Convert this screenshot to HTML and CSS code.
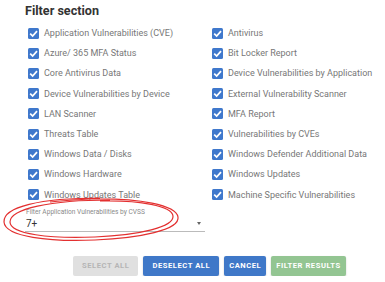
FILE: index.html
```html
<!DOCTYPE html>
<html lang="en">
<head>
  <meta charset="UTF-8" />
  <title>Filter section</title>
  <link rel="stylesheet" href="styles.css">
</head>
<body>
  <div class="panel">
    <h2 class="title">Filter section</h2>

    <div class="grid">
      <label class="item"><span class="box"><svg viewBox="0 0 10 10"><path d="M2 5.2 L4.2 7.3 L8.2 2.9" /></svg></span>Application Vulnerabilities (CVE)</label>
      <label class="item"><span class="box"><svg viewBox="0 0 10 10"><path d="M2 5.2 L4.2 7.3 L8.2 2.9" /></svg></span>Antivirus</label>
      <label class="item"><span class="box"><svg viewBox="0 0 10 10"><path d="M2 5.2 L4.2 7.3 L8.2 2.9" /></svg></span>Azure/ 365 MFA Status</label>
      <label class="item"><span class="box"><svg viewBox="0 0 10 10"><path d="M2 5.2 L4.2 7.3 L8.2 2.9" /></svg></span>Bit Locker Report</label>
      <label class="item"><span class="box"><svg viewBox="0 0 10 10"><path d="M2 5.2 L4.2 7.3 L8.2 2.9" /></svg></span>Core Antivirus Data</label>
      <label class="item"><span class="box"><svg viewBox="0 0 10 10"><path d="M2 5.2 L4.2 7.3 L8.2 2.9" /></svg></span>Device Vulnerabilities by Application</label>
      <label class="item"><span class="box"><svg viewBox="0 0 10 10"><path d="M2 5.2 L4.2 7.3 L8.2 2.9" /></svg></span>Device Vulnerabilities by Device</label>
      <label class="item"><span class="box"><svg viewBox="0 0 10 10"><path d="M2 5.2 L4.2 7.3 L8.2 2.9" /></svg></span>External Vulnerability Scanner</label>
      <label class="item"><span class="box"><svg viewBox="0 0 10 10"><path d="M2 5.2 L4.2 7.3 L8.2 2.9" /></svg></span>LAN Scanner</label>
      <label class="item"><span class="box"><svg viewBox="0 0 10 10"><path d="M2 5.2 L4.2 7.3 L8.2 2.9" /></svg></span>MFA Report</label>
      <label class="item"><span class="box"><svg viewBox="0 0 10 10"><path d="M2 5.2 L4.2 7.3 L8.2 2.9" /></svg></span>Threats Table</label>
      <label class="item"><span class="box"><svg viewBox="0 0 10 10"><path d="M2 5.2 L4.2 7.3 L8.2 2.9" /></svg></span>Vulnerabilities by CVEs</label>
      <label class="item"><span class="box"><svg viewBox="0 0 10 10"><path d="M2 5.2 L4.2 7.3 L8.2 2.9" /></svg></span>Windows Data / Disks</label>
      <label class="item"><span class="box"><svg viewBox="0 0 10 10"><path d="M2 5.2 L4.2 7.3 L8.2 2.9" /></svg></span>Windows Defender Additional Data</label>
      <label class="item"><span class="box"><svg viewBox="0 0 10 10"><path d="M2 5.2 L4.2 7.3 L8.2 2.9" /></svg></span>Windows Hardware</label>
      <label class="item"><span class="box"><svg viewBox="0 0 10 10"><path d="M2 5.2 L4.2 7.3 L8.2 2.9" /></svg></span>Windows Updates</label>
      <label class="item"><span class="box"><svg viewBox="0 0 10 10"><path d="M2 5.2 L4.2 7.3 L8.2 2.9" /></svg></span>Windows Updates Table</label>
      <label class="item"><span class="box"><svg viewBox="0 0 10 10"><path d="M2 5.2 L4.2 7.3 L8.2 2.9" /></svg></span>Machine Specific Vulnerabilities</label>
    </div>

    <div class="select-wrap">
      <div class="select">
        <div class="select-label">Filter Application Vulnerabilities by CVSS</div>
        <div class="select-value">7+</div>
        <span class="arrow"></span>
      </div>
      <!-- hand drawn red circle -->
      <svg class="scribble" viewBox="0 0 185 50">
        <path d="M100 3 C40 3 3 12 4 27 C5 42 50 47 95 45 C140 43 180 35 178 22 C176 10 140 3 90 4 C70 5 58 6 50 7" />
        <path d="M110 5 C50 5 10 14 10 27 C10 39 50 44 95 42 C140 40 174 32 173 21 C172 11 140 5 100 6" />
      </svg>
    </div>

    <div class="actions">
      <button class="btn disabled">Select all</button>
      <button class="btn blue wide">Deselect all</button>
      <button class="btn blue">Cancel</button>
      <button class="btn green">Filter results</button>
    </div>
  </div>
</body>
</html>
```

FILE: styles.css
```css
body {
  margin: 0;
  background: #fff;
  font-family: Roboto, "Liberation Sans", sans-serif;
}

.panel {
  padding: 1px 0 0 25px;
  width: 350px;
}

.title {
  margin: 0 0 2px 0;
  font-size: 12.6px;
  font-weight: 700;
  color: #333;
  line-height: 20px;
}

.grid {
  display: grid;
  grid-template-columns: 184px 1fr;
  padding-left: 3px;
}

.item {
  display: flex;
  align-items: center;
  gap: 5px;
  height: 20.2px;
  font-size: 9px;
  color: #777;
  white-space: nowrap;
}

.box {
  width: 11px;
  height: 11px;
  border-radius: 1.5px;
  background: #3f78cc;
  flex-shrink: 0;
  display: flex;
}

.box svg {
  width: 11px;
  height: 11px;
}

.box path {
  fill: none;
  stroke: #fff;
  stroke-width: 1.6;
}

.select-wrap {
  position: relative;
  margin-top: 2px;
  width: 180px;
}

.select {
  position: relative;
  border-bottom: 1px solid #bbb;
  padding-left: 1px;
}

.select-label {
  font-size: 6.6px;
  color: #8a8a8a;
  line-height: 10px;
}

.select-value {
  font-size: 10px;
  color: #333;
  line-height: 14px;
}

.arrow {
  position: absolute;
  right: 4px;
  top: 15px;
  border-left: 2.5px solid transparent;
  border-right: 2.5px solid transparent;
  border-top: 3px solid #666;
}

.scribble {
  position: absolute;
  left: -25px;
  top: -12px;
  width: 185px;
  height: 50px;
}

.scribble path {
  fill: none;
  stroke: #e33030;
  stroke-width: 1.2;
}

.actions {
  display: flex;
  gap: 5px;
  margin: 24px 0 0 48px;
}

.btn {
  height: 20px;
  border: none;
  border-radius: 2px;
  font-family: Roboto, "Liberation Sans", sans-serif;
  font-size: 7.6px;
  font-weight: 700;
  letter-spacing: 0.55px;
  text-transform: uppercase;
  padding: 0 5px;
  color: #fff;
  box-shadow: 0 1px 2px rgba(0,0,0,0.2);
}

.btn.wide,
.btn.disabled {
  padding: 0 9px;
}

.btn.disabled {
  background: #e0e0e0;
  color: #b5b5b5;
  box-shadow: none;
}

.btn.blue {
  background: #3f78c8;
}

.btn.green {
  background: #93c592;
}
```
